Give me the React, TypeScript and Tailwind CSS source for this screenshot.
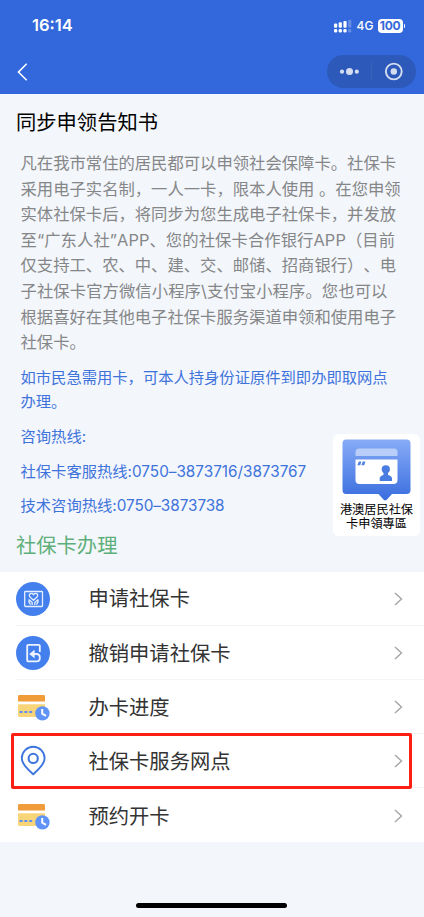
import type { ReactNode } from "react";

const notice = [
  "凡在我市常住的居民都可以申领社会保障卡。社保卡",
  "采用电子实名制，一人一卡，限本人使用 。在您申领",
  "实体社保卡后，将同步为您生成电子社保卡，并发放",
  "至“广东人社”APP、您的社保卡合作银行APP（目前",
  "仅支持工、农、中、建、交、邮储、招商银行）、电",
  "子社保卡官方微信小程序\\支付宝小程序。您也可以",
  "根据喜好在其他电子社保卡服务渠道申领和使用电子",
  "社保卡。",
];

const ApplyIcon = () => (
  <svg width="34" height="34" viewBox="0 0 34 34" fill="none">
    <circle cx="17" cy="17" r="17" fill="#4380ee" />
    <g stroke="#e6efff" strokeWidth="1.3" strokeLinecap="round" strokeLinejoin="round">
      <rect x="8.7" y="9.5" width="17.8" height="15" rx="0.8" />
      <path d="M17.5 18.2 14 15C12 12.4 15 10 17.5 12.7 20 10 23 12.4 21 15Z" />
      <path d="M13 17.8 16.2 20.4V22.4M22 17.8 18.8 20.4V22.4M13 17.8V20.2L14.2 22.2M22 17.8V20.2L20.8 22.2" />
    </g>
  </svg>
);

const RevokeIcon = () => (
  <svg width="34" height="34" viewBox="0 0 34 34" fill="none">
    <circle cx="17" cy="17" r="17" fill="#4380ee" />
    <path
      d="M23.8 16V9.8Q23.8 8.8 22.8 8.8H12.2Q11.2 8.8 11.2 9.8V24.4Q11.2 25.4 12.2 25.4H20.4C25 25.4 25 18 20.4 18H17"
      stroke="#eef4ff"
      strokeWidth="1.8"
    />
    <path d="M13.2 18 18.6 13.8V22.2Z" fill="#eef4ff" />
  </svg>
);

const ProgressIcon = () => (
  <svg width="34" height="34" viewBox="0 0 34 34" fill="none">
    <path d="M2 11.5V6.4Q2 5 3.4 5H27.6Q29 5 29 6.4V11.5Z" fill="#f09c3b" />
    <path d="M2 14.3H29V27H3.4Q2 27 2 25.6Z" fill="#f9d579" />
    <path d="M3.6 22H17" stroke="#5e90f2" strokeWidth="2" strokeDasharray="3 1.8" />
    <circle cx="26.4" cy="23.4" r="7.2" fill="#5f93f7" />
    <path d="M26.2 19V23.6L30 25.8" stroke="#fff" strokeWidth="2" />
  </svg>
);

const PinIcon = () => (
  <svg width="34" height="34" viewBox="0 0 34 34" fill="none">
    <path
      d="M17.2 30.2C13 26.2 5.8 21 5.8 14.2A11.4 11.4 0 0 1 28.6 14.2C28.6 21 21.4 26.2 17.2 30.2Z"
      stroke="#3e76de"
      strokeWidth="1.9"
    />
    <circle cx="17.2" cy="14.4" r="4.6" stroke="#3e76de" strokeWidth="2.1" />
  </svg>
);

const menus: { label: string; icon: ReactNode; active?: boolean }[] = [
  { label: "申请社保卡", icon: <ApplyIcon /> },
  { label: "撤销申请社保卡", icon: <RevokeIcon /> },
  { label: "办卡进度", icon: <ProgressIcon /> },
  { label: "社保卡服务网点", icon: <PinIcon />, active: true },
  { label: "预约开卡", icon: <ProgressIcon /> },
];

const Header = () => (
  <header className="h-[94px] bg-[#3268db] text-white">
    <div className="flex h-[51px] items-center justify-between pr-[19px] pl-8">
      <p className="text-[16.5px] font-semibold">16:14</p>
      <div className="flex items-center">
        <svg width="18" height="14" viewBox="0 0 18 14" fill="#fff">
          <rect x="0" y="4.4" width="3.2" height="4.3" rx="1" />
          <rect x="4.7" y="3.3" width="3.2" height="5.4" rx="1" />
          <rect x="9.4" y="2" width="3.2" height="6.7" rx="1" />
          <rect x="14.1" y="0.8" width="3.2" height="7.9" rx="1" opacity="0.25" />
          <rect x="0" y="10" width="3.2" height="3.4" rx="1.2" />
          <rect x="4.7" y="10" width="3.2" height="3.4" rx="1.2" />
          <rect x="9.4" y="10" width="3.2" height="3.4" rx="1.2" />
          <rect x="14.1" y="10" width="3.2" height="3.4" rx="1.2" opacity="0.25" />
        </svg>
        <span className="ml-[5px] w-[21px] text-[12px] font-medium">4G</span>
        <span className="flex h-[14px] w-[25px] items-center justify-center rounded-[4px] bg-white text-[12px] font-bold tracking-[-0.3px] text-[#3268db]">
          100
        </span>
        <span className="ml-px h-1 w-[1.5px] rounded-r bg-white" />
      </div>
    </div>
    <div className="flex h-[41px] items-center justify-between pr-[8px] pl-[17px]">
      <svg width="11" height="18" viewBox="0 0 11 18" fill="none" stroke="#fff" strokeWidth="1.5">
        <path d="M9.7 0.8 1.4 9.1 9.7 17.2" />
      </svg>
      <div className="flex h-[33px] w-[89px] items-center rounded-full bg-[#2d59ba]">
        <svg width="89" height="33" viewBox="0 0 89 33" fill="#d5def1">
          <circle cx="15" cy="16.7" r="2.1" />
          <circle cx="22.5" cy="16.5" r="3.5" />
          <circle cx="29.8" cy="16.7" r="2.1" />
          <path d="M44.5 7V26" stroke="#3c63bb" strokeWidth="0.8" />
          <circle cx="66.8" cy="16.5" r="7.9" fill="none" stroke="#d5def1" strokeWidth="1.9" />
          <circle cx="66.8" cy="16.5" r="3.2" />
        </svg>
      </div>
    </div>
  </header>
);

const RegionCard = () => (
  <div className="absolute top-[434px] left-[333px] flex h-[102px] w-[87px] flex-col items-center rounded-md bg-white pt-[5px]">
    <svg width="69" height="62" viewBox="0 0 69 62">
      <defs>
        <linearGradient id="bubble" x1="0" y1="0" x2="0" y2="1">
          <stop offset="0" stopColor="#87abf7" />
          <stop offset="1" stopColor="#396dde" />
        </linearGradient>
      </defs>
      <path
        d="M4 0.5H64.5Q68.5 0.5 68.5 4.5V51Q68.5 55 64.5 55H50L45 60.5Q43.2 62.2 41.4 60.5L36.5 55H4Q0.5 55 0.5 51V4.5Q0.5 0.5 4 0.5Z"
        fill="url(#bubble)"
      />
      <path d="M13.5 17V13Q13.5 9.5 17.5 9.5H52Q55.5 9.5 55.5 13V17Z" fill="#b8cdf8" />
      <path d="M13.5 20.5H55.5V41Q55.5 45 51.5 45H17.5Q13.5 45 13.5 41Z" fill="#fff" />
      <path d="M16.8 22.5H19.4L18.2 26.2H15.4ZM20.8 22.5H23.4L22.2 26.2H19.4Z" fill="#4f7fe3" />
      <circle cx="43.8" cy="30.3" r="4.1" fill="#4a7be1" />
      <path d="M41.5 32H46V36Q50 37 50 39.5V42H37.7V39.5Q37.7 37 41.5 36Z" fill="#4a7be1" />
    </svg>
    <p className="mt-[2px] text-center text-[12.2px] leading-[13.5px] whitespace-nowrap text-black">
      港澳居民社保
      <br />
      卡申領專區
    </p>
  </div>
);

const App = () => {
  return (
    <main className="relative flex h-[917px] w-full flex-col overflow-hidden bg-[#f3f6fb] font-['Inter','Noto_Sans_CJK_SC',sans-serif] [text-spacing-trim:space-all]">
      <Header />
      <h1 className="mt-[13px] pl-4 text-[20.3px] leading-[31px] text-black">同步申领告知书</h1>
      <div className="mt-[13px] pl-[20.5px] text-[16.33px] leading-[25.6px] whitespace-nowrap text-[#858688]">
        {notice.map((line) => (
          <p key={line} className={/[A-Z\\]/.test(line) ? "tracking-[0.08px]" : ""}>
            {line}
          </p>
        ))}
      </div>
      <div className="mt-[10px] flex flex-col gap-[10.2px] pl-[20.5px] text-[15.3px] leading-[24.5px] whitespace-nowrap text-[#3e73dc]">
        <p>
          如市民急需用卡，可本人持身份证原件到即办即取网点
          <br />
          办理。
        </p>
        <p>咨询热线:</p>
        <p>
          社保卡客服热线:<span className="tracking-[-0.01px]">0750–3873716/3873767</span>
        </p>
        <p>
          技术咨询热线:<span className="tracking-[-0.06px]">0750–3873738</span>
        </p>
      </div>
      <h2 className="mt-[11px] pl-4 text-[20.3px] leading-[31px] text-[#5eb07a]">社保卡办理</h2>
      <ul className="mt-[10.7px] h-[270px] bg-white">
        {menus.map(({ label, icon, active }) => (
          <li key={label} className="relative ml-4 flex h-[54.2px] items-center border-b border-[#f3f4f6] pt-px last:border-b-0">
            {icon}
            <span className="ml-[38.5px] flex-1 pt-[2px] text-[20.3px] text-[#333]">{label}</span>
            <svg className="mr-[21px]" width="9" height="14" viewBox="0 0 9 14" fill="none" stroke="#a5a5a5" strokeWidth="1.4">
              <path d="M1 1 7.5 7 1 13" />
            </svg>
            {active && (
              <div className="absolute top-[-1.5px] left-[-5px] h-[56px] w-[401px] rounded-[2px] border-3 border-[#fb2013]" />
            )}
          </li>
        ))}
      </ul>
      <div className="mt-auto mb-[9px] ml-[136px] h-[5px] w-[151px] rounded-full bg-black" />
      <RegionCard />
    </main>
  );
};

export default App;
